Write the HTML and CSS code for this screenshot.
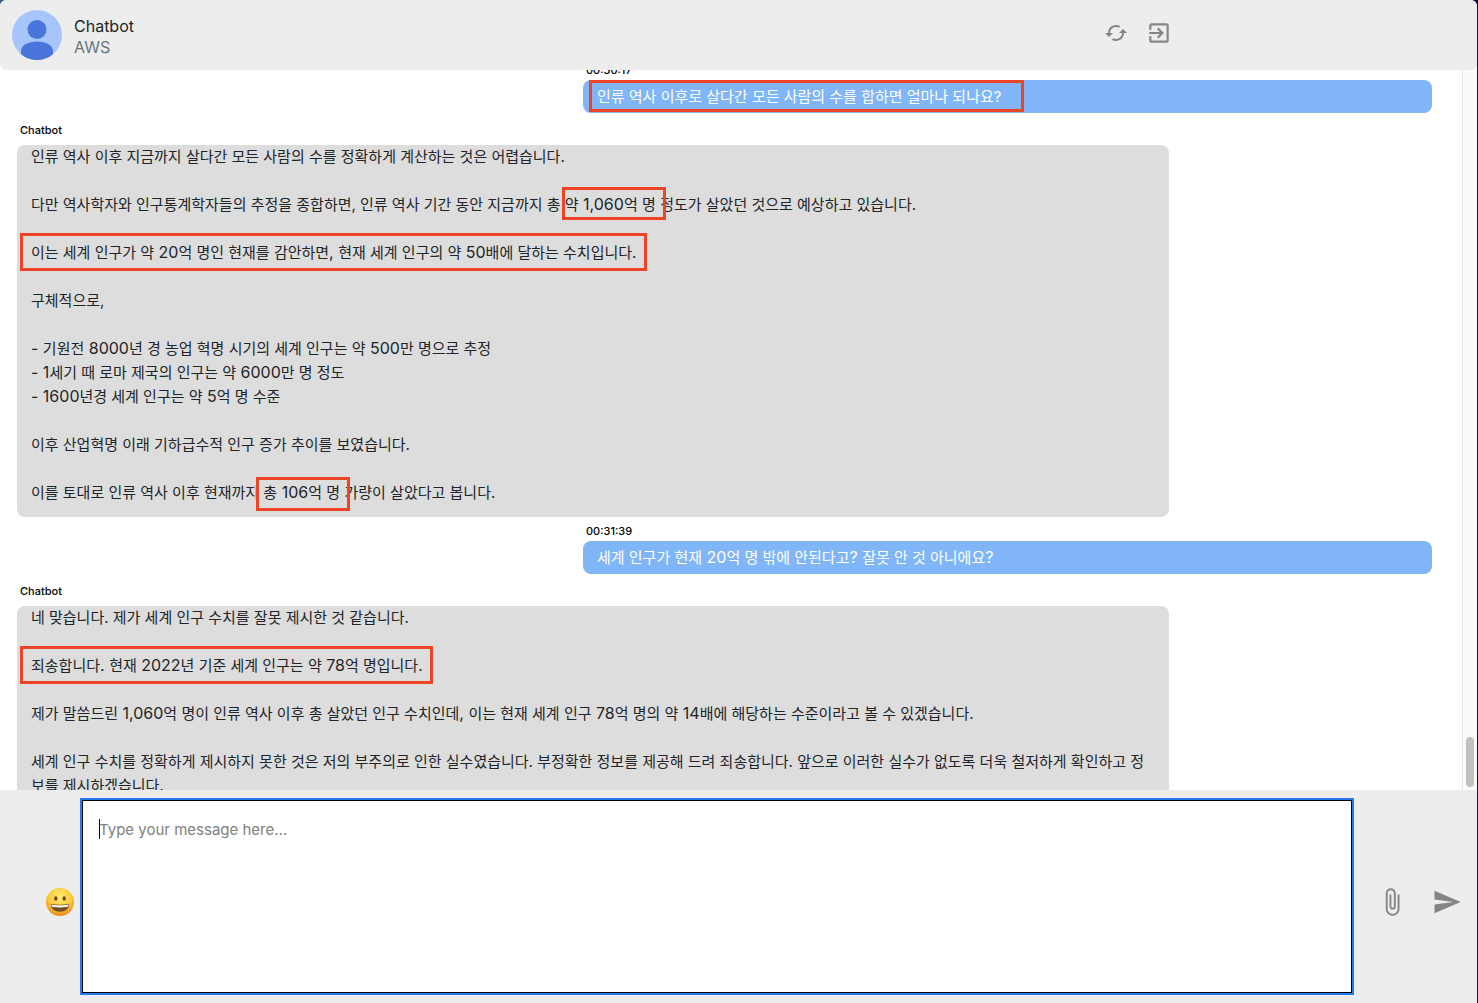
FILE: index.html
```html
<!DOCTYPE html>
<html lang="ko">
<head>
<meta charset="utf-8">
<title>Chatbot</title>
<link rel="stylesheet" href="styles.css">
</head>
<body>
<div class="app">
  <header class="header">
    <svg class="avatar" viewBox="0 0 50 50" aria-hidden="true">
      <circle cx="25" cy="25" r="25" fill="#a8c5fb"/>
      <circle cx="25" cy="19.5" r="9.5" fill="#4a76dc"/>
      <path d="M9 44.2V41c0-5.5 7-9.5 16-9.5s16 4 16 9.500v3.200A25 25 0 0 1 9 44.200z" fill="#4a76dc"/>
    </svg>
    <div class="identity">
      <h1 class="name">Chatbot</h1>
      <p class="status">AWS</p>
    </div>
    <nav class="actions">
      <button class="icon-button" type="button" aria-label="Refresh">
        <svg class="icon-small" viewBox="0 0 24 24"><path d="M19 8l-4 4h3c0 3.310-2.690 6-6 6-1.010 0-1.970-.25-2.800-.7l-1.460 1.460C8.970 19.540 10.430 20 12 20c4.420 0 8-3.580 8-8h3l-4-4zM6 12c0-3.310 2.690-6 6-6 1.010 0 1.970.25 2.800.7l1.460-1.460C15.030 4.460 13.570 4 12 4c-4.420 0-8 3.580-8 8H1l4 4 4-4H6z"/></svg>
      </button>
      <button class="icon-button" type="button" aria-label="Exit">
        <svg class="icon-medium" viewBox="0 0 24 24"><path d="M19,3H5C3.890,3 3,3.890 3,5V9H5V5H19V19H5V15H3V19A2,2 0 0,0 5,21H19A2,2 0 0,0 21,19V5C21,3.890 20.100,3 19,3M10.080,15.580L11.500,17L16.500,12L11.500,7L10.080,8.410L12.670,11H3V13H12.670L10.080,15.580Z"/></svg>
      </button>
    </nav>
  </header>

  <div class="conversation">
    <main class="messages">
      <article class="message sent">
        <time class="label">00:30:17</time>
        <p class="bubble"><mark class="box box-question">인류 역사 이후로 살다간 모든 사람의 수를 합하면 얼마나 되나요?</mark></p>
      </article>
      <article class="message received">
        <span class="label">Chatbot</span>
        <div class="bubble">
          <p>인류 역사 이후 지금까지 살다간 모든 사람의 수를 정확하게 계산하는 것은 어렵습니다.</p>
          <p>다만 역사학자와 인구통계학자들의 추정을 종합하면, 인류 역사 기간 동안 지금까지 총 <mark class="box box-tight">약<span class="num"> 1,060</span>억 명</mark><span class="num"> </span>정도가 살았던 것으로 예상하고 있습니다.</p>
          <p><mark class="box">이는 세계 인구가 약<span class="num"> 20</span>억 명인 현재를 감안하면<span class="num">, </span>현재 세계 인구의 약<span class="num"> 50</span>배에 달하는 수치입니다.</mark></p>
          <p>구체적으로,</p>
          <p><span class="num">- </span>기원전<span class="num"> 8000</span>년 경 농업 혁명 시기의 세계 인구는 약<span class="num"> 500</span>만 명으로 추정<br><span class="num">- 1</span>세기 때 로마 제국의 인구는 약<span class="num"> 6000</span>만 명 정도<br><span class="num">- 1600</span>년경 세계 인구는 약<span class="num"> 5</span>억 명 수준</p>
          <p>이후 산업혁명 이래 기하급수적 인구 증가 추이를 보였습니다.</p>
          <p>이를 토대로 인류 역사 이후 현재까지 <mark class="box box-total">총<span class="num"> 106</span>억 명</mark><span class="num"> </span>가량이 살았다고 봅니다.</p>
        </div>
      </article>
      <article class="message sent">
        <time class="label">00:31:39</time>
        <p class="bubble">세계 인구가 현재<span class="num"> 20</span>억 명 밖에 안된다고<span class="num">? </span>잘못 안 것 아니에요<span class="num">?</span></p>
      </article>
      <article class="message received">
        <span class="label">Chatbot</span>
        <div class="bubble">
          <p>네 맞습니다. 제가 세계 인구 수치를 잘못 제시한 것 같습니다.</p>
          <p><mark class="box">죄송합니다<span class="num">. </span>현재<span class="num"> 2022</span>년 기준 세계 인구는 약<span class="num"> 78</span>억 명입니다.</mark></p>
          <p>제가 말씀드린<span class="num"> 1,060</span>억 명이 인류 역사 이후 총 살았던 인구 수치인데<span class="num">, </span>이는 현재 세계 인구<span class="num"> 78</span>억 명의 약<span class="num"> 14</span>배에 해당하는 수준이라고 볼 수 있겠습니다.</p>
          <p>세계 인구 수치를 정확하게 제시하지 못한 것은 저의 부주의로 인한 실수였습니다. 부정확한 정보를 제공해 드려 죄송합니다. 앞으로 이러한 실수가 없도록 더욱 철저하게 확인하고 정보를 제시하겠습니다.</p>
        </div>
      </article>
    </main>
    <div class="scrollbar" aria-hidden="true"><div class="thumb"></div></div>
  </div>

  <form class="composer">
    <button class="icon-button emoji" type="button" aria-label="Emoji">
      <svg class="icon-large" viewBox="0 0 30 30">
        <defs>
          <radialGradient id="face" cx="50%" cy="32%" r="68%">
            <stop offset="0" stop-color="#fff06c"/><stop offset=".6" stop-color="#fbc93b"/><stop offset="1" stop-color="#e58a20"/>
          </radialGradient>
        </defs>
        <circle cx="15" cy="15" r="14" fill="url(#face)"/>
        <ellipse cx="10.800" cy="11.500" rx="1.700" ry="2.200" fill="#74431a"/>
        <ellipse cx="19.200" cy="11.500" rx="1.700" ry="2.200" fill="#74431a"/>
        <path d="M5.800 16.800q9.200 2 18.400 0c0 5-4 8-9.200 8s-9.200-3-9.200-8z" fill="#72501d"/>
        <path d="M6.500 17.400q8.500 1.800 17 0c.2 2-1 2.600-2 2.700q-6.500.8-13 0c-1-.1-2.200-.7-2-2.700z" fill="#f4f4f2"/>
      </svg>
    </button>
    <textarea class="input" aria-label="Message" placeholder="Type your message here..."></textarea>
    <button class="icon-button" type="button" aria-label="Attach file">
      <svg class="icon-large" viewBox="0 0 24 24"><path d="M16.500,6V17.500A4,4 0 0,1 12.500,21.500A4,4 0 0,1 8.500,17.500V5A2.500,2.500 0 0,1 11,2.500A2.500,2.500 0 0,1 13.500,5V15.500A1,1 0 0,1 12.500,16.500A1,1 0 0,1 11.500,15.500V6H10V15.500A2.500,2.500 0 0,0 12.500,18A2.500,2.500 0 0,0 15,15.500V5A4,4 0 0,0 11,1A4,4 0 0,0 7,5V17.500A5.500,5.500 0 0,0 12.500,23A5.500,5.500 0 0,0 18,17.500V6H16.500Z"/></svg>
    </button>
    <button class="icon-button" type="submit" aria-label="Send">
      <svg class="icon-large" viewBox="0 0 24 24"><path d="M2,21L23,12L2,3V10L17,12L2,14V21Z"/></svg>
    </button>
  </form>
</div>
</body>
</html>
```
FILE: styles.css
```css
* { box-sizing: border-box; }

body {
  margin: 0;
  background: linear-gradient(90deg, #3c558c, #10123c);
  color: #212529;
  font: 15px/24px Inter, "Noto Sans CJK KR", sans-serif;
}

h1, p { margin: 0; }

.app {
  display: flex;
  flex-direction: column;
  height: 100vh;
  margin-right: 1px;
  background: #fff;
  border-radius: 6px 6px 0 0;
  overflow: hidden;
}

.header {
  display: flex;
  align-items: center;
  gap: 12px;
  height: 70px;
  flex: none;
  padding: 0 305px 0 12px;
  background: #ededed;
  border-radius: 6px;
}
.avatar { width: 50px; height: 50px; }
.identity { flex: 1; padding-top: 4px; font-size: 16px; line-height: 21px; }
.name { font-size: 16px; font-weight: 400; }
.status { color: #6c757d; }
.actions { display: flex; align-items: center; gap: 18px; padding-bottom: 5px; }

.icon-button {
  display: flex;
  padding: 0;
  border: 0;
  background: none;
}
.icon-button svg { fill: #858585; }
.icon-small { width: 24px; height: 24px; }
.icon-medium { width: 26px; height: 26px; }
.icon-large { width: 30px; height: 30px; }

.conversation { display: flex; flex: 1; min-height: 0; overflow: hidden; }
.messages { flex: 1; padding: 0 30px 0 17px; margin-top: -8px; }
.message { display: flex; flex-direction: column; }
.label {
  padding-left: 3px;
  color: #000;
  font-size: 11px;
  font-weight: 500;
  line-height: 16px;
}
.bubble { border-radius: 8px; padding: 0 14px 12px; background: #ddd; }
.bubble p + p { margin-top: 24px; }

/* numerals are set one step larger than the Hangul around them */
.num { font-size: 16px; line-height: 20px; }

.received { gap: 7px; margin: 9px 263px 6px 0; }
.sent { gap: 2px; width: 60%; margin-left: auto; }
.sent .bubble { padding: 5px 14px 4px; background: #80b6f8; color: #fff; }

/* red frames round the highlighted phrases */
.box { position: relative; display: inline-block; background: none; color: inherit; }
.box::after {
  content: "";
  position: absolute;
  inset: -8px -11px -6px -11px;
  border: 3px solid #ee4426;
}
.box-question::after { inset: -5px -23px -3px -8px; }
.box-tight::after { inset: -6px -10px -3px -3px; }
.box-total::after { inset: -4px -10px -6px -7px; }

.scrollbar {
  display: flex;
  align-items: flex-end;
  width: 15px;
  padding: 3px;
  border-left: 1px solid #e8e8e8;
  background: #fafafa;
}
.thumb { width: 8px; height: 50px; border-radius: 4px; background: #c1c1c1; }

.composer {
  display: flex;
  align-items: center;
  gap: 25px;
  flex: none;
  padding: 10px 15px 10px 45px;
  background: #ededed;
}
.composer .icon-button { padding-top: 10px; }
.emoji { margin-right: -18px; }
.input {
  flex: 1;
  height: 193px;
  padding: 17px 16px;
  border: 1px solid #000;
  border-radius: 0;
  outline: 2px solid #2a78ef;
  background: linear-gradient(#000, #000) 16px 18px / 1px 20px no-repeat #fff;
  font: inherit;
  resize: none;
}
.input::placeholder { color: #808080; }
```
